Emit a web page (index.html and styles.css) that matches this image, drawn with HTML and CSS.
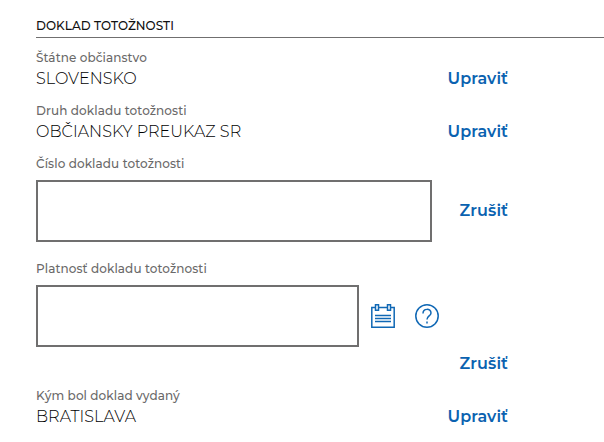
FILE: index.html
```html
<!DOCTYPE html>
<html lang="sk">
<head>
<meta charset="utf-8">
<title>Doklad totožnosti</title>
<link rel="stylesheet" href="styles.css">
</head>
<body>
<main class="section">
  <h2 class="heading">DOKLAD TOTOŽNOSTI</h2>
  <div class="field">
    <div class="label">Štátne občianstvo</div>
    <div class="row"><span class="value">SLOVENSKO</span><a class="link">Upraviť</a></div>
  </div>
  <div class="field">
    <div class="label">Druh dokladu totožnosti</div>
    <div class="row"><span class="value">OBČIANSKY PREUKAZ SR</span><a class="link">Upraviť</a></div>
  </div>
  <div class="field field-number">
    <label class="label" for="number">Číslo dokladu totožnosti</label>
    <div class="row input-row"><input id="number" class="input" type="text"><a class="link">Zrušiť</a></div>
  </div>
  <div class="field field-date">
    <label class="label" for="validity">Platnosť dokladu totožnosti</label>
    <div class="input-row date-row">
      <input id="validity" class="input input-date" type="text">
      <svg class="icon" viewBox="0 0 24 24"><path d="M4.500 3.500H.8V23.200H23.200V3.500H19.500M7.500 3.500h9M4.500.8h3v5.400h-3zM16.500.8h3v5.400h-3z"/><path d="M4 11.500h16M4 14.500h16M4 17.500h16"/></svg>
      <svg class="icon" viewBox="0 0 24 24"><circle cx="12" cy="12" r="11.200"/><path d="M8 9.500C8 4.100 16 4.100 16 8.900C16 12 12 11.900 12 15.500M12 17.500v2"/></svg>
    </div>
    <div class="row action-row"><a class="link">Zrušiť</a></div>
  </div>
  <div class="field">
    <div class="label">Kým bol doklad vydaný</div>
    <div class="row"><span class="value">BRATISLAVA</span><a class="link">Upraviť</a></div>
  </div>
</main>
</body>
</html>
```
FILE: styles.css
```css
* { box-sizing: border-box; }
body { margin: 0; background: #fff; font-family: Montserrat, Inter, sans-serif; color: #111; overflow: hidden; }
.section { padding: 16px 0 0 36px; }
.heading { margin: 0 0 11px; height: 22px; border-bottom: 1px solid #706f6f; font-size: 12px; line-height: 20px; font-weight: 500; letter-spacing: .04px; }
.field { width: 472px; margin-bottom: 11px; }
.label { display: block; height: 18px; font-size: 12px; line-height: 18px; font-weight: 500; letter-spacing: .09px; color: #6a6969; }
.row { display: flex; align-items: center; justify-content: space-between; min-height: 24px; }
.value { font-size: 16px; line-height: 24px; font-weight: 300; letter-spacing: .05px; color: #000; }
.link { margin-left: auto; font-size: 16px; line-height: 24px; font-weight: 600; letter-spacing: .1px; color: #0a62b0; }
.input-row { margin-top: 7px; }
.input { display: block; width: 396px; height: 62px; margin: 0; padding: 0 12px; border: 2px solid #706f6f; border-radius: 0; background: #fff; font: inherit; }
.input-date { width: 323px; }
.date-row { display: flex; align-items: center; }
.icon { width: 24px; height: 24px; margin-left: 12px; fill: none; stroke: #1068b5; stroke-width: 1.500; }
.icon + .icon { margin-left: 20px; }
.action-row { margin-top: 5px; }
.field-number { margin-bottom: 18px; }
```
